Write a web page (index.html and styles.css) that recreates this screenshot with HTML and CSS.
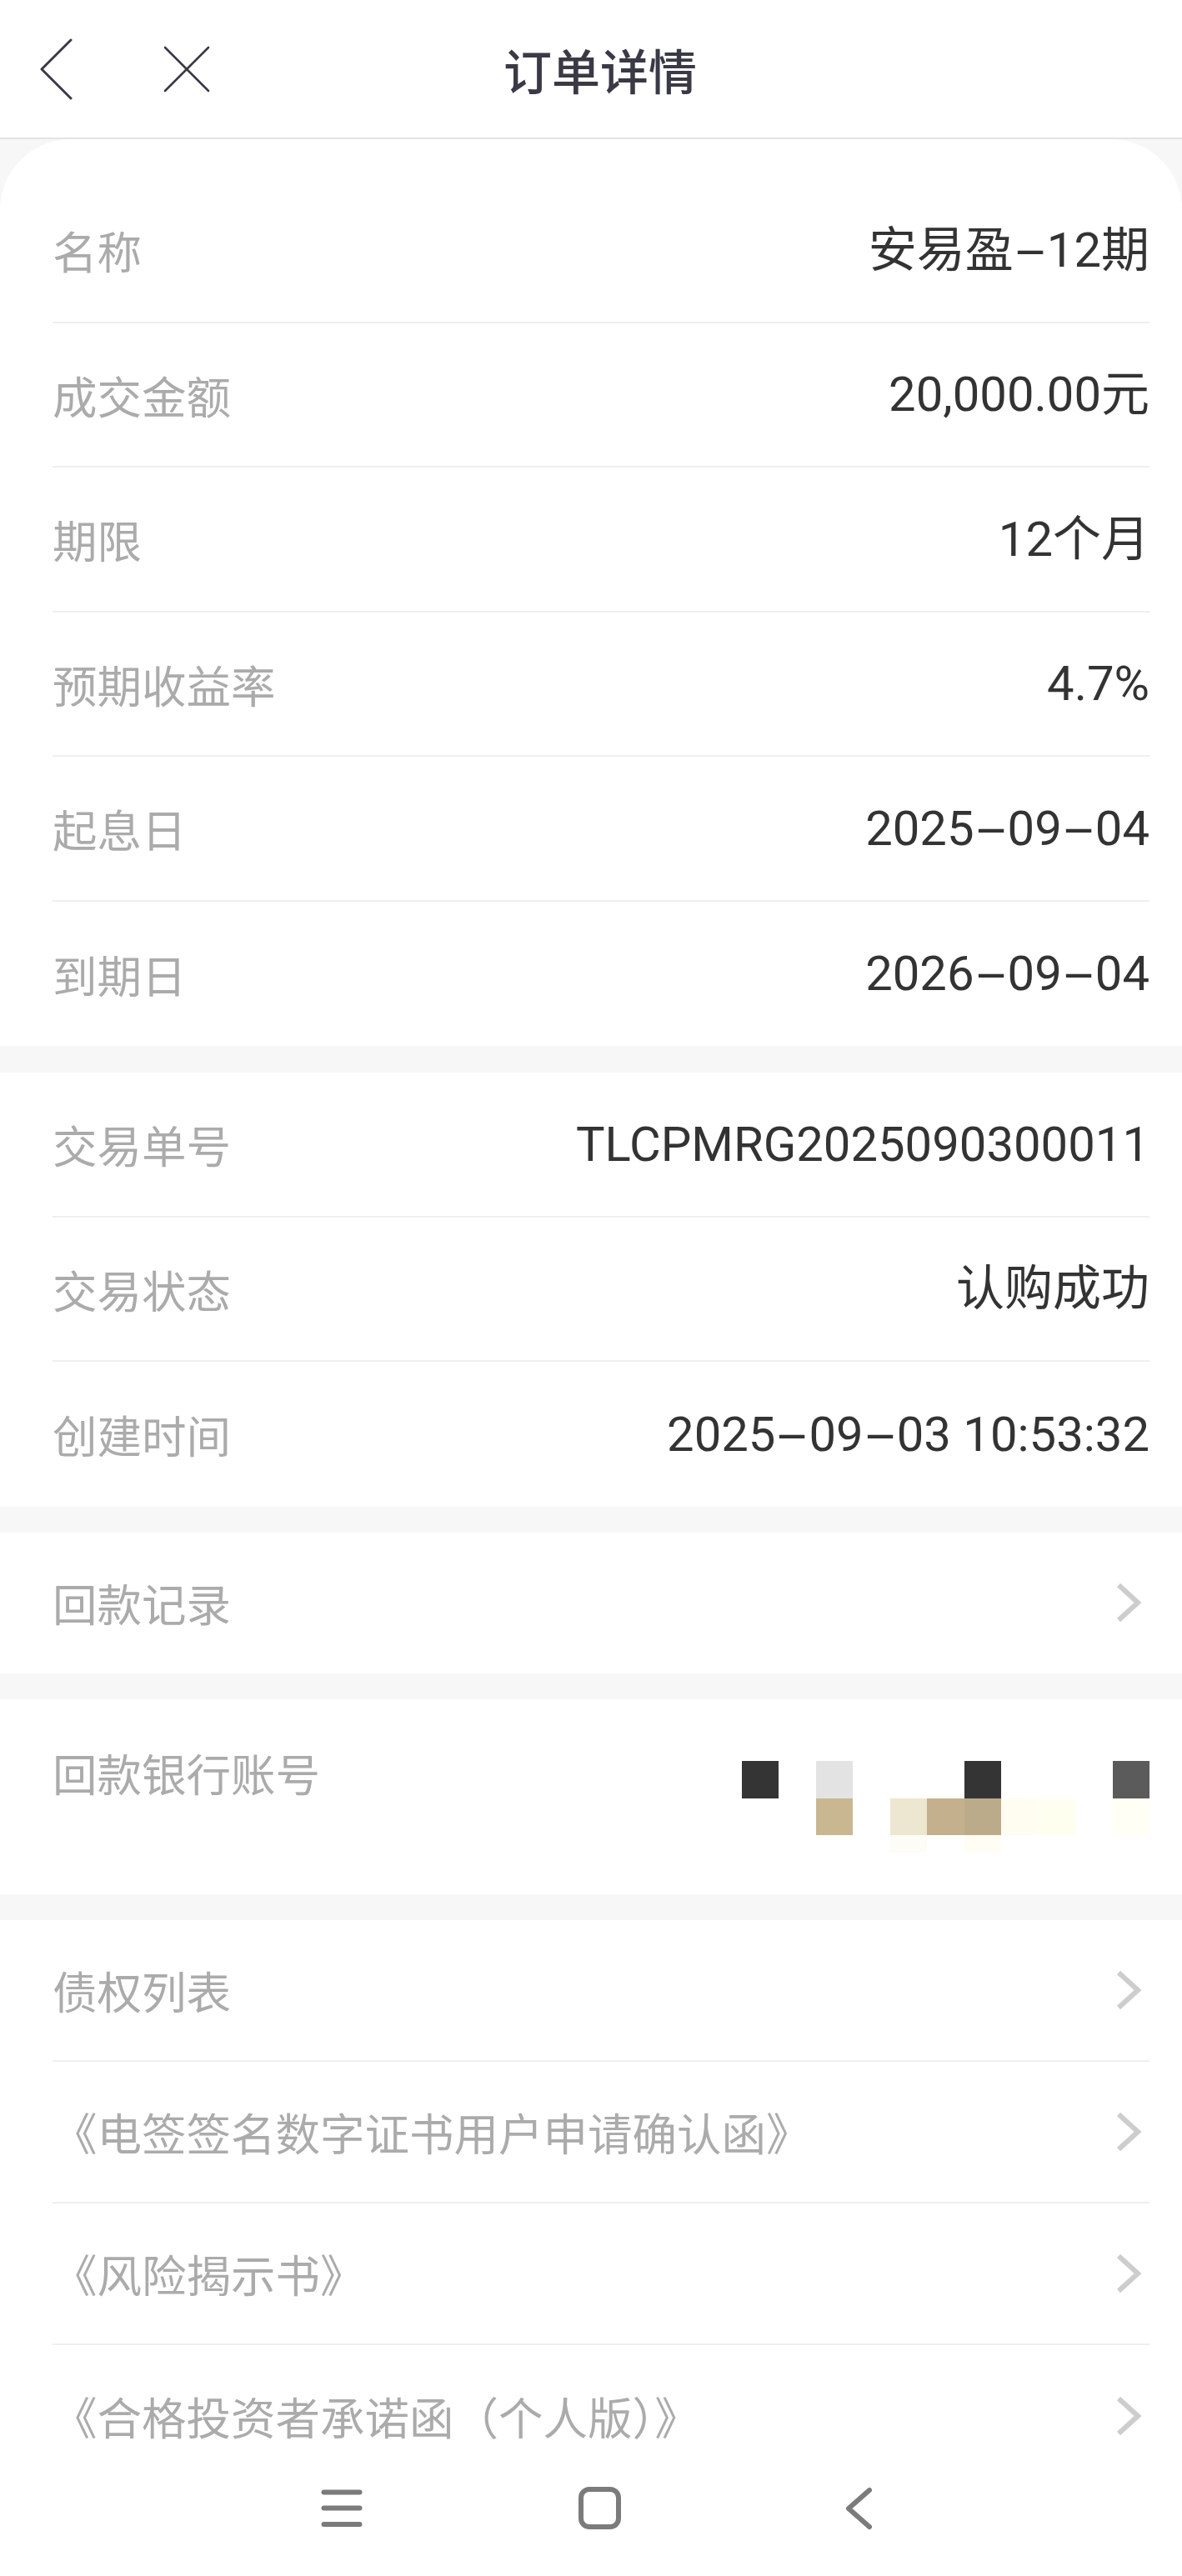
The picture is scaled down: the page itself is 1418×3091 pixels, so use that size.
FILE: index.html
```html
<!DOCTYPE html>
<html lang="zh-CN">
<head>
<meta charset="utf-8">
<title>订单详情</title>
<link rel="stylesheet" href="styles.css">
</head>
<body>
<div class="page">
  <header class="header">
    <div class="header-left">
      <svg class="ico-back" width="40" height="74" viewBox="0 0 40 74"><polyline points="37,2 2,37 37,72" fill="none" stroke="#3a3a46" stroke-width="3" stroke-linecap="round" stroke-linejoin="round"/></svg>
      <svg class="ico-close" width="56" height="56" viewBox="0 0 56 56"><line x1="2" y1="2" x2="54" y2="54" stroke="#3a3a46" stroke-width="2.6" stroke-linecap="round"/><line x1="54" y1="2" x2="2" y2="54" stroke="#3a3a46" stroke-width="2.6" stroke-linecap="round"/></svg>
    </div>
    <h1 class="title">订单详情</h1>
    <div class="header-right"></div>
  </header>

  <section class="section section-first">
    <div class="row"><span class="label">名称</span><span class="value">安易盈<span class="dash">-</span>12期</span></div>
    <div class="row"><span class="label">成交金额</span><span class="value">20,000.00元</span></div>
    <div class="row"><span class="label">期限</span><span class="value">12个月</span></div>
    <div class="row"><span class="label">预期收益率</span><span class="value">4.7%</span></div>
    <div class="row"><span class="label">起息日</span><span class="value">2025<span class="dash">-</span>09<span class="dash">-</span>04</span></div>
    <div class="row"><span class="label">到期日</span><span class="value">2026<span class="dash">-</span>09<span class="dash">-</span>04</span></div>
  </section>

  <section class="section section-second">
    <div class="row"><span class="label">交易单号</span><span class="value">TLCPMRG2025090300011</span></div>
    <div class="row"><span class="label">交易状态</span><span class="value">认购成功</span></div>
    <div class="row"><span class="label">创建时间</span><span class="value">2025<span class="dash">-</span>09<span class="dash">-</span>03 10:53:32</span></div>
  </section>

  <section class="section section-third">
    <div class="row row-link row-single"><span class="label">回款记录</span>
      <svg class="chev" width="30" height="48" viewBox="0 0 30 48"><polyline points="3,3 26,24 3,45" fill="none" stroke="#cdcdcd" stroke-width="6"/></svg>
    </div>
  </section>

  <section class="section section-bank">
    <div class="bank">
      <span class="label">回款银行账号</span>
      <div class="mosaic">
        <i class="c c-dark"></i><i class="c"></i><i class="c c-grey"></i><i class="c"></i><i class="c"></i><i class="c"></i><i class="c c-dark"></i><i class="c"></i><i class="c"></i><i class="c"></i><i class="c c-mid"></i>
        <i class="c"></i><i class="c"></i><i class="c c-tan1"></i><i class="c"></i><i class="c c-cream"></i><i class="c c-tan2"></i><i class="c c-tan3"></i><i class="c c-ivory1"></i><i class="c c-ivory2"></i><i class="c"></i><i class="c c-ivory3"></i>
        <i class="c"></i><i class="c"></i><i class="c"></i><i class="c"></i><i class="c c-faint1"></i><i class="c"></i><i class="c c-faint2"></i><i class="c"></i><i class="c"></i><i class="c"></i><i class="c"></i>
      </div>
    </div>
  </section>

  <section class="section section-docs">
    <div class="row row-link row-doc"><span class="label">债权列表</span>
      <svg class="chev" width="30" height="48" viewBox="0 0 30 48"><polyline points="3,3 26,24 3,45" fill="none" stroke="#cdcdcd" stroke-width="6"/></svg>
    </div>
    <div class="row row-link row-doc"><span class="label">《电签签名数字证书用户申请确认函》</span>
      <svg class="chev" width="30" height="48" viewBox="0 0 30 48"><polyline points="3,3 26,24 3,45" fill="none" stroke="#cdcdcd" stroke-width="6"/></svg>
    </div>
    <div class="row row-link row-doc"><span class="label">《风险揭示书》</span>
      <svg class="chev" width="30" height="48" viewBox="0 0 30 48"><polyline points="3,3 26,24 3,45" fill="none" stroke="#cdcdcd" stroke-width="6"/></svg>
    </div>
    <div class="row row-link row-doc"><span class="label">《合格投资者承诺函（个人版）》</span>
      <svg class="chev" width="30" height="48" viewBox="0 0 30 48"><polyline points="3,3 26,24 3,45" fill="none" stroke="#cdcdcd" stroke-width="6"/></svg>
    </div>
  </section>

  <nav class="navbar">
    <span class="nav-btn"><svg width="50" height="46" viewBox="0 0 50 46"><g stroke="#7b7b7b" stroke-width="6" stroke-linecap="round"><line x1="3.5" y1="3.5" x2="46.5" y2="3.5"/><line x1="3.5" y1="22.5" x2="46.5" y2="22.5"/><line x1="3.5" y1="42" x2="46.5" y2="42"/></g></svg></span>
    <span class="nav-btn"><svg width="52" height="52" viewBox="0 0 52 52"><rect x="3" y="3" width="45" height="45" rx="10" fill="none" stroke="#7b7b7b" stroke-width="6"/></svg></span>
    <span class="nav-btn"><svg width="34" height="52" viewBox="0 0 34 52"><polyline points="30,4 5,26 30,48" fill="none" stroke="#7b7b7b" stroke-width="6" stroke-linecap="round" stroke-linejoin="round"/></svg></span>
  </nav>
</div>
</body>
</html>
```

FILE: styles.css
```css
html, body {
  margin: 0;
  padding: 0;
}
body {
  background: #f7f7f7;
  font-family: "Noto Sans CJK SC", "Noto Sans", sans-serif;
}
.page {
  width: 1418px;
}
.header {
  height: 165px;
  background: #ffffff;
  border-bottom: 2px solid #e3e3e3;
  display: grid;
  grid-template-columns: 1fr auto 1fr;
  align-items: center;
}
.header-left {
  display: flex;
  align-items: center;
  padding-left: 48px;
  gap: 108px;
}
.ico-back, .ico-close {
  display: block;
}
.title {
  margin: 0;
  padding-left: 22px;
  font-family: "Noto Sans CJK SC", sans-serif;
  font-size: 58px;
  font-weight: 500;
  line-height: 1;
  color: #3a3a46;
}
.section {
  background: #ffffff;
}
.section-first {
  border-radius: 85px 85px 0 0;
  padding-top: 47px;
}
.section-second {
  margin-top: 32px;
}
.section-third {
  margin-top: 31px;
}
.section-bank {
  margin-top: 31.5px;
}
.section-docs {
  margin-top: 31px;
}
.row {
  display: flex;
  justify-content: space-between;
  align-items: center;
  height: 173.5px;
  margin: 0 39px 0 63px;
  border-bottom: 2px solid #efefef;
  box-sizing: border-box;
}
.row:last-child {
  border-bottom: none;
}
.row-single {
  height: 169px;
}
.row-doc {
  height: 170px;
}
.label {
  font-family: "Noto Sans CJK SC", sans-serif;
  font-size: 53.5px;
  line-height: 1;
  color: #ababab;
  white-space: nowrap;
}
.value {
  font-family: Roboto, "Noto Sans CJK SC", sans-serif;
  font-size: 58px;
  line-height: 1;
  color: #333333;
  white-space: nowrap;
}
.dash {
  display: inline-block;
  margin: 0 12px;
  transform: scaleX(2.2);
}
.chev {
  display: block;
  margin-right: 10px;
}
.bank {
  display: flex;
  justify-content: space-between;
  align-items: flex-start;
  height: 234px;
  margin: 0 39px 0 63px;
  padding-top: 61px;
  box-sizing: border-box;
}
.mosaic {
  margin-top: 13px;
  display: grid;
  grid-template-columns: repeat(11, 44.5px);
  grid-template-rows: 44.5px 44.5px 21px;
}
.c {
  display: block;
}
.c-dark { background: #343434; }
.c-grey { background: #e3e3e3; }
.c-mid { background: #5b5b5b; }
.c-tan1 { background: #c8b791; }
.c-cream { background: #ede7d1; }
.c-tan2 { background: #c4b08d; }
.c-tan3 { background: #bcab8b; }
.c-ivory1 { background: #fffdf1; }
.c-ivory2 { background: #fffff0; }
.c-ivory3 { background: #fffff5; }
.c-faint1 { background: #fdfcf7; }
.c-faint2 { background: #fffdf4; }
.navbar {
  height: 107px;
  background: #ffffff;
  display: flex;
  justify-content: center;
  align-items: flex-start;
  gap: 250px;
  padding-left: 22px;
  box-sizing: border-box;
}
.nav-btn {
  width: 60px;
  display: flex;
  justify-content: center;
}
.nav-btn:first-child {
  padding-top: 3px;
}
.nav-btn svg {
  display: block;
}
```
